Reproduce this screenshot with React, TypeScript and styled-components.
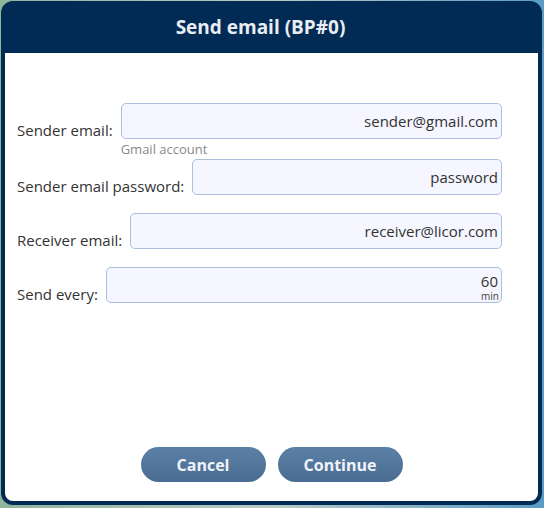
import React from 'react';
import styled, { createGlobalStyle } from 'styled-components';

const GlobalStyle = createGlobalStyle`
    html, body {
        margin: 0;
        padding: 0;
        background: linear-gradient(90deg, #8fb59a 0%, #b9c9c4 50%, #5a9cc4 100%);
        font-family: "Open Sans", "Noto Sans", sans-serif;
    }
`

const Dialog = styled.div`
    display: flex;
    flex-direction: column;
    box-sizing: border-box;
    width: 541px;
    height: 504px;
    margin: 1px 0 0 1px;
    padding: 0 4px 4px 4px;
    background-color: #012a54;
    border-radius: 12px;
`

const Header = styled.div`
    display: flex;
    align-items: center;
    justify-content: center;
    height: 52px;
    padding-right: 22px;
    color: #e9edf3;
    font-size: 19px;
    font-weight: bold;
`

const Body = styled.div`
    flex: 1;
    display: flex;
    flex-direction: column;
    background-color: #ffffff;
    border-radius: 0 0 8px 8px;
    padding: 50px 0 19px 0;
`

const Form = styled.div`
    display: flex;
    flex-direction: column;
    padding: 0 36px 0 12px;
`

const Row = styled.div<{ $spaced: boolean }>`
    display: flex;
    flex-direction: row;
    align-items: flex-start;
    margin-bottom: ${p => (p.$spaced ? 18 : 0)}px;
`

const Label = styled.label`
    display: flex;
    align-items: flex-end;
    height: 35px;
    margin-right: 8px;
    font-size: 15px;
    line-height: 1;
    color: #333333;
    white-space: nowrap;
`

const FieldColumn = styled.div`
    flex: 1;
    display: flex;
    flex-direction: column;
`

const InputWrap = styled.div`
    position: relative;
`

const StyledInput = styled.input<{ $withUnit: boolean }>`
    box-sizing: border-box;
    width: 100%;
    height: 36px;
    margin: 0;
    padding: 0 3px ${p => (p.$withUnit ? 8 : 0)}px 8px;
    border: 1px solid #a9c0de;
    border-radius: 5px;
    background-color: #f5f6ff;
    font-family: "Open Sans", "Noto Sans", sans-serif;
    font-size: 15px;
    color: #333333;
    text-align: right;
    outline: none;
`

const Unit = styled.span`
    position: absolute;
    right: 3px;
    bottom: 2px;
    font-size: 10px;
    line-height: 1;
    color: #444444;
`

const Hint = styled.div`
    height: 20px;
    font-size: 13px;
    line-height: 20px;
    color: #8a8a8a;
`

const Footer = styled.div`
    margin-top: auto;
    display: flex;
    flex-direction: row;
    justify-content: center;
    gap: 12px;
`

const StyledButton = styled.button`
    width: 125px;
    height: 35px;
    border: none;
    border-radius: 18px;
    background: linear-gradient(#5b80a6, #496c92);
    color: #f0f3f8;
    font-family: "Open Sans", "Noto Sans", sans-serif;
    font-size: 16px;
    font-weight: bold;
    cursor: pointer;
`

type Field = {
    label: string;
    value: string;
    hint?: string;
    unit?: string;
};

const fields: Field[] = [
    { label: 'Sender email:', value: 'sender@gmail.com', hint: 'Gmail account' },
    { label: 'Sender email password:', value: 'password' },
    { label: 'Receiver email:', value: 'receiver@licor.com' },
    { label: 'Send every:', value: '60', unit: 'min' },
];

function App() {
    return (
        <>
            <GlobalStyle />
            <Dialog>
                <Header>Send email (BP#0)</Header>
                <Body>
                    <Form>
                        {fields.map((f, index) => (
                            <Row key={index} $spaced={!f.hint}>
                                <Label>{f.label}</Label>
                                <FieldColumn>
                                    <InputWrap>
                                        <StyledInput defaultValue={f.value} $withUnit={!!f.unit} />
                                        {f.unit && <Unit>{f.unit}</Unit>}
                                    </InputWrap>
                                    {f.hint && <Hint>{f.hint}</Hint>}
                                </FieldColumn>
                            </Row>
                        ))}
                    </Form>
                    <Footer>
                        <StyledButton type={"button"}>Cancel</StyledButton>
                        <StyledButton type={"button"}>Continue</StyledButton>
                    </Footer>
                </Body>
            </Dialog>
        </>
    );
}

export default App;
